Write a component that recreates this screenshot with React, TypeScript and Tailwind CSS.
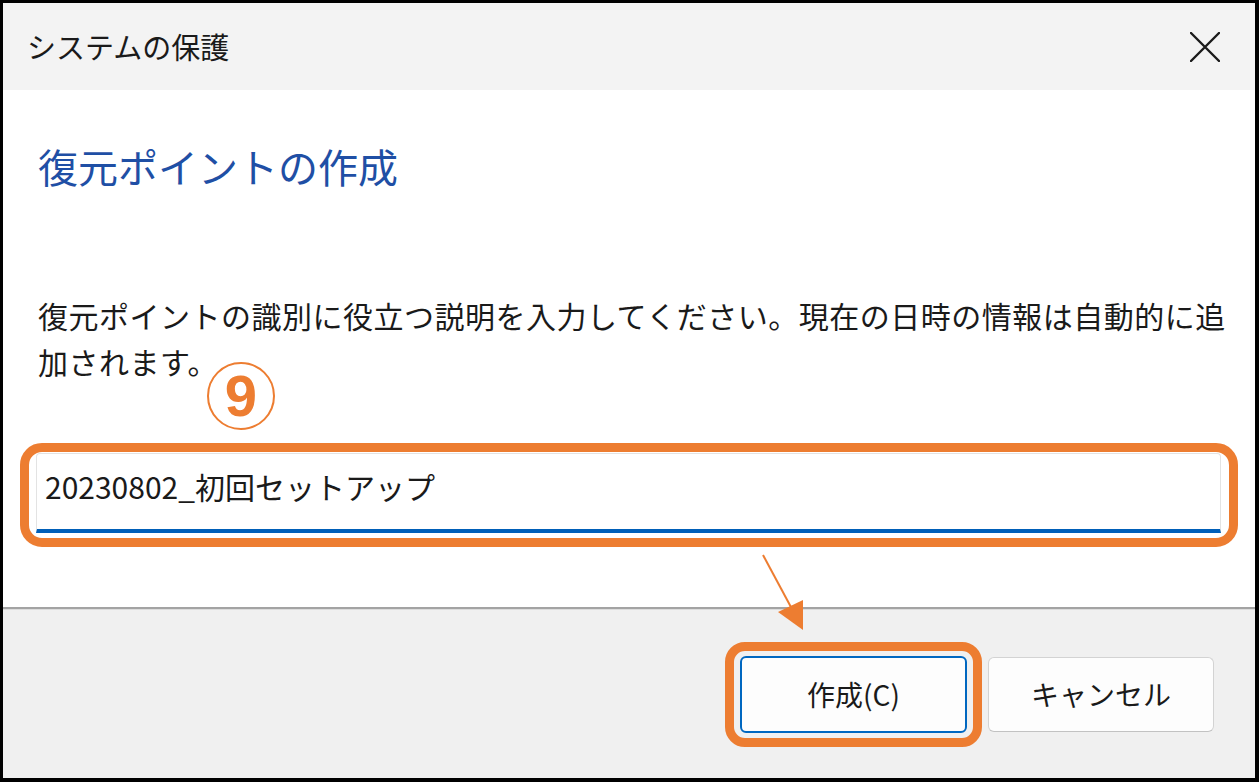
import React from 'react'

const font = { fontFamily: '"Noto Sans CJK JP", "Noto Sans", sans-serif' }

function CloseIcon() {
  return (
    <svg width="30" height="30" viewBox="0 0 30 30" fill="none">
      <path d="M1 1 L29 29 M29 1 L1 29" stroke="#1a1a1a" strokeWidth="2.4" strokeLinecap="round" />
    </svg>
  )
}

export default function App() {
  return (
    <div className="relative w-[1259px] h-[782px] bg-white" style={font}>
      <div className="w-full h-full flex flex-col border-[3px] border-r-[4px] border-b-[4px] border-black">
        {/* タイトルバー */}
        <div className="h-[87px] shrink-0 flex items-center justify-between pl-[24px] pr-[35px] bg-[#f3f3f3]">
          <span className="text-[29px] leading-none text-[#1a1a1a]">システムの保護</span>
          <CloseIcon />
        </div>

        {/* 本文 */}
        <div className="h-[517px] shrink-0 bg-white flex flex-col pl-[35px]">
          <h1 className="mt-[52px] text-[40px] leading-[48px] text-[#1f4fa5] font-normal">
            復元ポイントの作成
          </h1>
          <p className="mt-[102px] text-[30px] leading-[46px] tracking-[0.5px] text-[#1a1a1a] whitespace-nowrap">
            復元ポイントの識別に役立つ説明を入力してください。現在の日時の情報は自動的に追
            <br />
            加されます。
          </p>
          <div className="-ml-[18px] mt-[59px] w-[1218px] h-[104px] border-[9px] border-[#ed7d31] rounded-[22px] pt-[1px] pb-[5px] pl-[7px] pr-[8px]">
            <div className="h-full bg-white border border-[#e3e3e3] border-b-[4px] border-b-[#005fb8] rounded-t-[4px] flex items-center pl-[8px] pb-[12px]">
              <span className="text-[30px] leading-none text-[#1a1a1a]">20230802_初回セットアップ</span>
            </div>
          </div>
        </div>

        {/* 区切り線 */}
        <div className="h-[2px] shrink-0 bg-[#a3a3a3]" />
        <div className="h-[1px] shrink-0 bg-[#dcdcdc]" />

        {/* フッター */}
        <div className="flex-1 bg-[#f0f0f0] flex items-center justify-end pr-[41px] gap-[6px]">
          <div className="border-[9px] border-[#ed7d31] rounded-[20px] px-[6px] py-[5px]">
            <button className="w-[227px] h-[77px] rounded-[6px] border-2 border-[#0067c0] bg-[#fdfdfd] text-[28px] text-[#1a1a1a]">
              作成(C)
            </button>
          </div>
          <button className="w-[226px] h-[75px] rounded-[6px] border border-[#d3d3d3] border-b-[#c2c2c2] bg-[#fdfdfd] text-[28px] text-[#1a1a1a]">
            キャンセル
          </button>
        </div>
      </div>

      {/* 注釈: ⑨ */}
      <div className="absolute left-[207px] top-[362px] w-[68px] h-[68px] rounded-full border-2 border-[#ed7d31] flex items-center justify-center">
        <span
          className="text-[58px] leading-none font-bold text-[#ed7d31]"
          style={{ fontFamily: '"Liberation Sans", Arial, sans-serif' }}
        >
          9
        </span>
      </div>

      {/* 注釈: 矢印 */}
      <svg className="absolute left-0 top-0 pointer-events-none" width="1259" height="782">
        <line x1="763" y1="555" x2="792" y2="609" stroke="#ed7d31" strokeWidth="2" />
        <polygon points="778,612 803,600 803,630" fill="#ed7d31" />
      </svg>
    </div>
  )
}
